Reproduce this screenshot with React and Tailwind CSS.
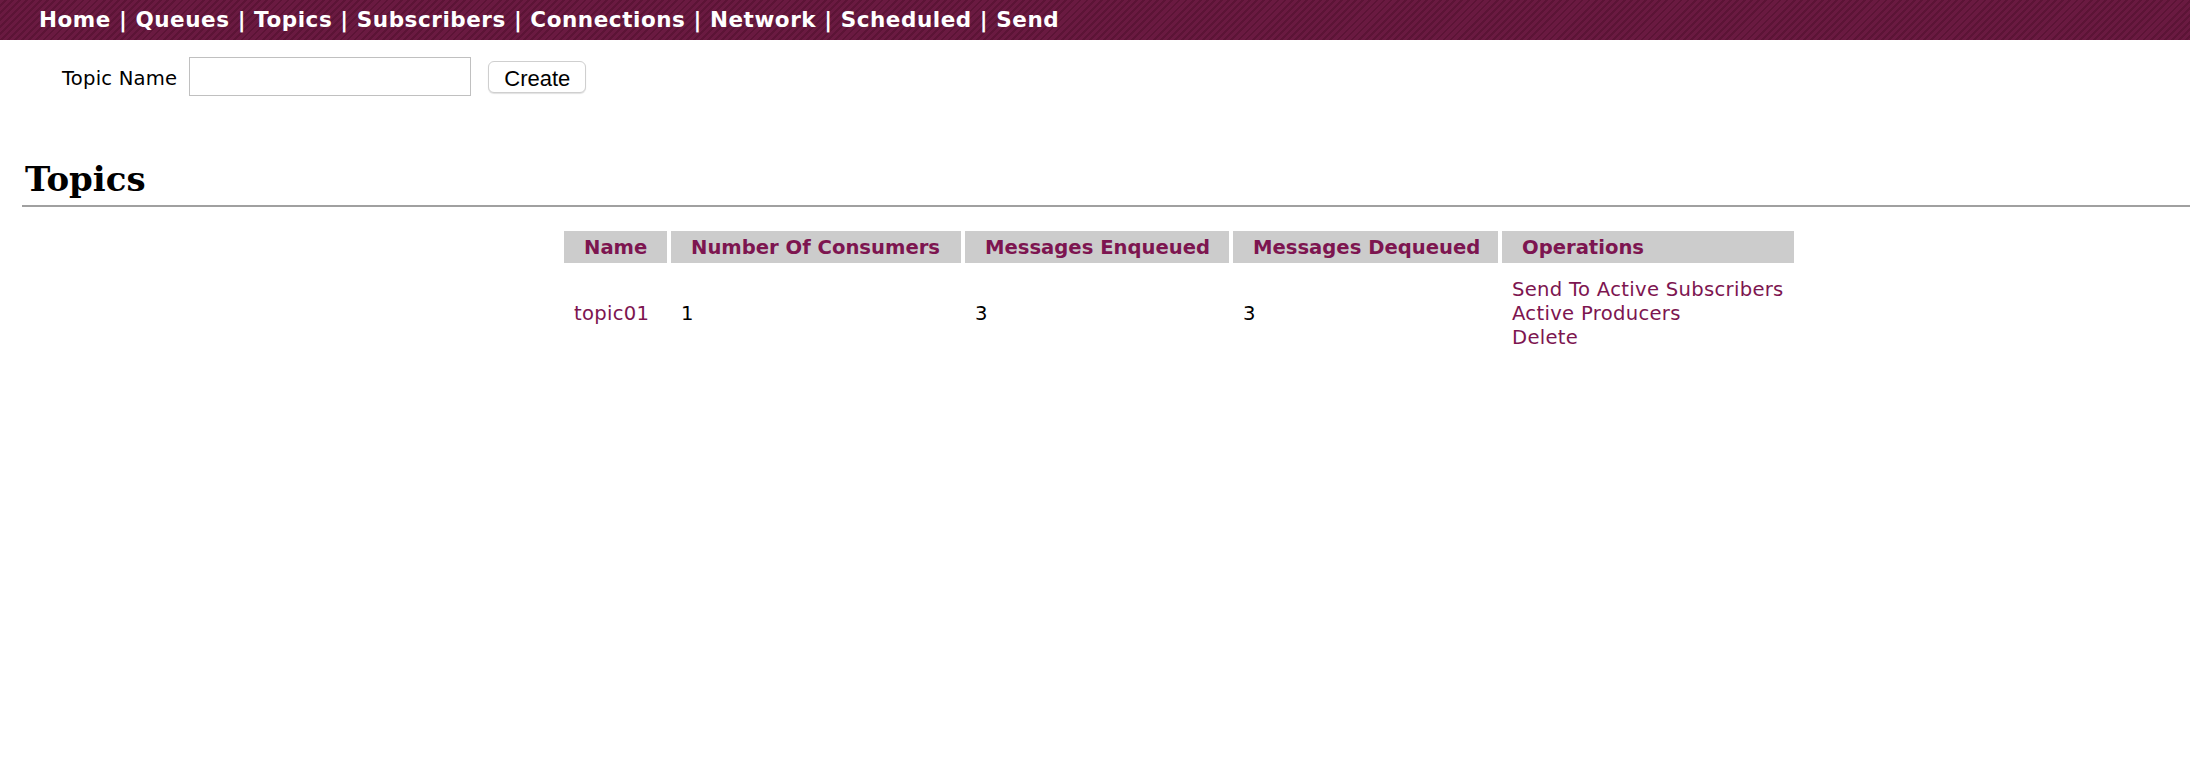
import React from 'react';

const navItems = ['Home', 'Queues', 'Topics', 'Subscribers', 'Connections', 'Network', 'Scheduled', 'Send'];

const columns = [
  { label: 'Name', width: 'w-[103px]' },
  { label: 'Number Of Consumers', width: 'w-[290px]' },
  { label: 'Messages Enqueued', width: 'w-[264px]' },
  { label: 'Messages Dequeued', width: 'w-[265px]' },
  { label: 'Operations', width: 'w-[292px]' },
];

const topics = [
  { name: 'topic01', consumers: 1, enqueued: 3, dequeued: 3 },
];

export default function App() {
  return (
    <div className="min-h-screen bg-white text-black font-['DejaVu_Sans',Verdana,sans-serif]">
      {/* top navigation bar */}
      <div className="h-[40px] bg-[repeating-linear-gradient(135deg,#6a1a41_0px,#6a1a41_3px,#5c1436_3px,#5c1436_5px)] pl-[39px] text-[21.5px] font-bold leading-[40px] tracking-[0.55px] text-white whitespace-nowrap">
        {navItems.map((item, i) => (
          <span key={item}>
            <a href="#" className="text-white">{item}</a>
            {i < navItems.length - 1 && <span> | </span>}
          </span>
        ))}
      </div>

      {/* create topic form */}
      <div className="flex items-center pt-[17px] pl-[62px] text-[19.6px] tracking-[0.2px]">
        <label className="mt-[4px]">Topic Name</label>
        <input type="text" className="ml-[12px] h-[39px] w-[282px] border border-[#c0c0c0] bg-white px-1 outline-none" />
        <button className="ml-[17px] h-[32px] w-[98px] rounded-[6px] border border-[#cfcfcf] bg-white text-[22px] tracking-normal font-['Liberation_Sans',Arial,sans-serif] shadow-[0_1px_1px_rgba(0,0,0,0.12)]">
          Create
        </button>
      </div>

      {/* section heading */}
      <h2 className="ml-[22px] mt-[62px] border-b-2 border-[#a0a0a0] pb-[5px] pl-[3px] text-[34px] font-bold leading-[42px] font-['DejaVu_Serif',Georgia,serif]">
        Topics
      </h2>

      <table className="mt-[20px] ml-[560px] border-separate border-spacing-[4px] text-[19.6px] leading-[24px]">
        <thead>
          <tr>
            {columns.map((c) => (
              <th key={c.label} className={`${c.width} bg-[#cccccc] pt-[5px] pb-[3px] pl-[20px] text-left font-bold text-[#7d1550] whitespace-nowrap`}>
                {c.label}
              </th>
            ))}
          </tr>
        </thead>
        <tbody className="tracking-[0.3px]">
          {topics.map((t) => (
            <tr key={t.name}>
              <td className="pt-[11px] pb-[9px] px-[10px] align-middle">
                <a href="#" className="text-[#7d1550]">{t.name}</a>
              </td>
              <td className="pt-[11px] pb-[9px] px-[10px] align-middle">{t.consumers}</td>
              <td className="pt-[11px] pb-[9px] px-[10px] align-middle">{t.enqueued}</td>
              <td className="pt-[11px] pb-[9px] px-[10px] align-middle">{t.dequeued}</td>
              <td className="pt-[11px] pb-[9px] px-[10px] align-middle whitespace-nowrap">
                <a href="#" className="block text-[#7d1550]">Send To Active Subscribers</a>
                <a href="#" className="block text-[#7d1550]">Active Producers</a>
                <a href="#" className="block text-[#7d1550]">Delete</a>
              </td>
            </tr>
          ))}
        </tbody>
      </table>
    </div>
  );
}
